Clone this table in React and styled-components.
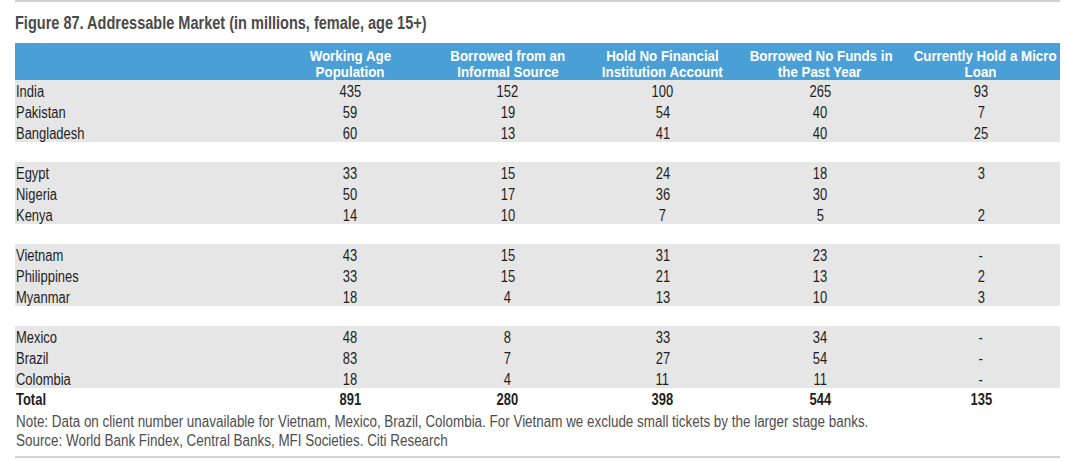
import React from "react";
import styled, { createGlobalStyle } from "styled-components";

const GlobalStyle = createGlobalStyle`
  html, body {
    margin: 0;
    padding: 0;
    background: #ffffff;
  }
  body {
    font-family: "Liberation Sans Narrow", "Arial Narrow", "Liberation Sans", Arial, sans-serif;
  }
`;

const COLS = "257px 156px 159px 151px 164px 158px";

const Page = styled.div`
  width: 1045px;
  margin-left: 15px;
  border-top: 2px solid #cfcfcf;
  border-bottom: 2px solid #d4d4d4;
`;

// no narrow face is installed, so the regular face is squeezed
const Narrow = styled.span`
  display: inline-block;
  white-space: nowrap;
  transform: scaleX(${(p) => p.$scale || 0.81});
  transform-origin: ${(p) => (p.$center ? "center" : "left")} center;
`;

const Title = styled.h1`
  margin: 0;
  height: 41px;
  padding-top: 11px;
  box-sizing: border-box;
  font-size: 17.5px;
  line-height: 20px;
  font-weight: 700;
  color: #4a4a4a;
`;

const HeaderRow = styled.div`
  display: grid;
  grid-template-columns: ${COLS};
  background: #4a9fd6;
  height: 37px;
  align-items: center;
`;

const HeadCell = styled.div`
  color: #ffffff;
  font-weight: 700;
  font-size: 15.5px;
  line-height: 16px;
  text-align: center;
  padding-top: 4px;
`;

const Group = styled.div`
  display: flex;
  flex-direction: column;
  height: ${(p) => (p.$plain ? "20px" : "62px")};
  background: ${(p) => (p.$plain ? "#ffffff" : "#e6e6e6")};
  margin-bottom: ${(p) => (p.$gap ? "20px" : "0")};
`;

const Row = styled.div`
  display: grid;
  grid-template-columns: ${COLS};
  flex: 1;
  align-items: center;
  padding-top: 3px;
  font-size: 16px;
  line-height: 18px;
  color: #1e1e1e;
  font-weight: ${(p) => (p.$bold ? 700 : 400)};
`;

const Label = styled.div`
  padding-left: 1px;
`;

const Num = styled.div`
  text-align: center;
`;

const Notes = styled.div`
  padding: 4px 0 6px 1px;
  font-size: 16px;
  line-height: 19px;
  color: #4d4d4d;
`;

const NoteLine = styled.div`
  height: 19px;
`;

const headers = [
  ["Working Age", "Population"],
  ["Borrowed from an", "Informal Source"],
  ["Hold No Financial", "Institution Account"],
  ["Borrowed No Funds in", "the Past Year"],
  ["Currently Hold a Micro", "Loan"],
];

const groups = [
  [
    ["India", "435", "152", "100", "265", "93"],
    ["Pakistan", "59", "19", "54", "40", "7"],
    ["Bangladesh", "60", "13", "41", "40", "25"],
  ],
  [
    ["Egypt", "33", "15", "24", "18", "3"],
    ["Nigeria", "50", "17", "36", "30", ""],
    ["Kenya", "14", "10", "7", "5", "2"],
  ],
  [
    ["Vietnam", "43", "15", "31", "23", "-"],
    ["Philippines", "33", "15", "21", "13", "2"],
    ["Myanmar", "18", "4", "13", "10", "3"],
  ],
  [
    ["Mexico", "48", "8", "33", "34", "-"],
    ["Brazil", "83", "7", "27", "54", "-"],
    ["Colombia", "18", "4", "11", "11", "-"],
  ],
];

const total = ["Total", "891", "280", "398", "544", "135"];

const DataRow = ({ cells, bold }) => (
  <Row $bold={bold}>
    <Label>
      <Narrow>{cells[0]}</Narrow>
    </Label>
    {cells.slice(1).map((c, i) => (
      <Num key={i}>
        <Narrow $center>{c}</Narrow>
      </Num>
    ))}
  </Row>
);

export default function App() {
  return (
    <>
      <GlobalStyle />
      <Page>
        <Title>
          <Narrow $scale={0.83}>Figure 87. Addressable Market (in millions, female, age 15+)</Narrow>
        </Title>
        <HeaderRow>
          <div />
          {headers.map((h) => (
            <HeadCell key={h[0]}>
              <Narrow $center $scale={0.86}>{h[0]}</Narrow>
              <br />
              <Narrow $center $scale={0.86}>{h[1]}</Narrow>
            </HeadCell>
          ))}
        </HeaderRow>
        {groups.map((g, gi) => (
          <Group key={gi} $gap={gi < groups.length - 1}>
            {g.map((r) => (
              <DataRow key={r[0]} cells={r} />
            ))}
          </Group>
        ))}
        <Group $plain>
          <DataRow cells={total} bold />
        </Group>
        <Notes>
          <NoteLine>
            <Narrow $scale={0.839}>
              Note: Data on client number unavailable for Vietnam, Mexico, Brazil, Colombia. For Vietnam we exclude small tickets by the larger stage banks.
            </Narrow>
          </NoteLine>
          <NoteLine>
            <Narrow $scale={0.839}>Source: World Bank Findex, Central Banks, MFI Societies. Citi Research</Narrow>
          </NoteLine>
        </Notes>
      </Page>
    </>
  );
}
